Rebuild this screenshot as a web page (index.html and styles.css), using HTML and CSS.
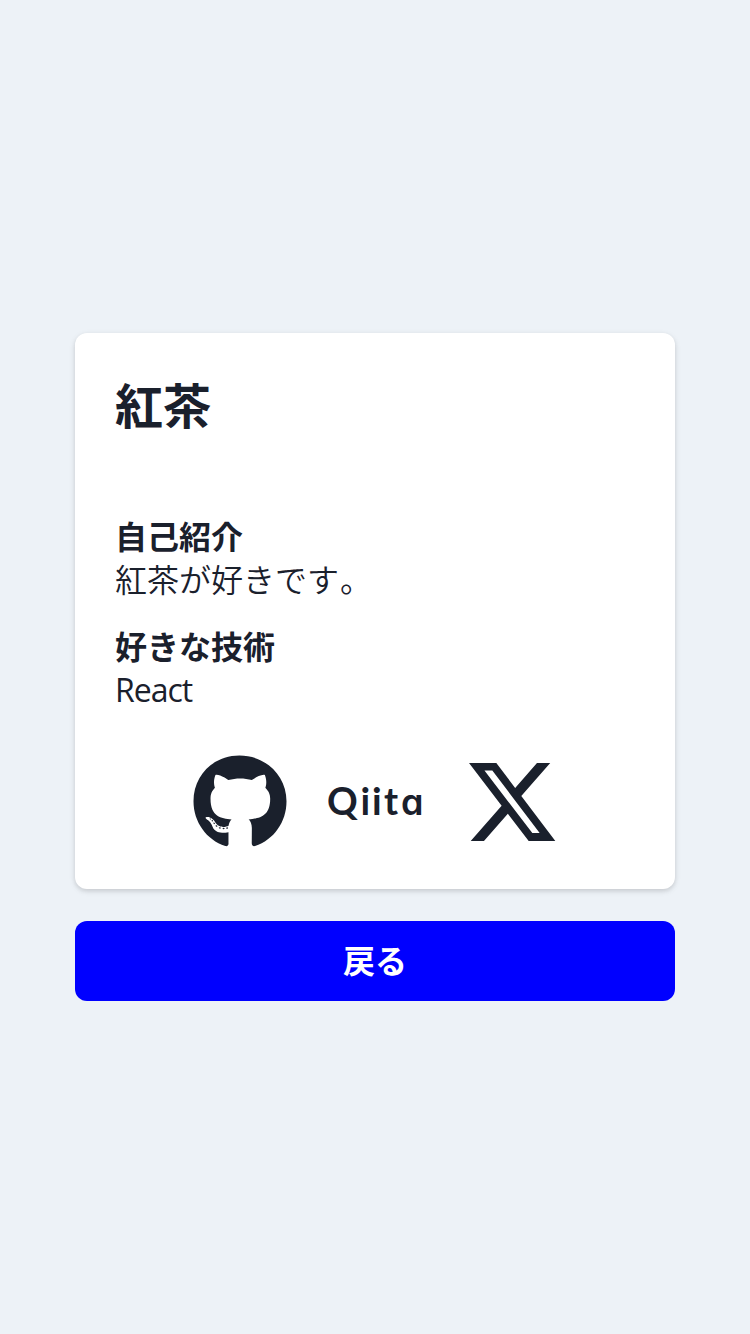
FILE: index.html
```html
<!DOCTYPE html>
<html lang="ja">
<head>
<meta charset="utf-8">
<meta name="viewport" content="width=device-width">
<title>紅茶</title>
<link rel="stylesheet" href="styles.css">
</head>
<body>
<main class="page">
  <section class="card">
    <h1 class="name">紅茶</h1>
    <div class="details">
      <section>
        <h2 class="label">自己紹介</h2>
        <p class="value">紅茶が好きです<span class="stop">。</span></p>
      </section>
      <section>
        <h2 class="label">好きな技術</h2>
        <p class="value latin">React</p>
      </section>
    </div>
    <nav class="links">
      <a class="link" aria-label="GitHub"><svg class="icon" viewBox="0 0 496 512"><path d="M165.9 397.4c0 2-2.3 3.6-5.2 3.6-3.3.3-5.6-1.3-5.6-3.6 0-2 2.3-3.6 5.2-3.6 3-.3 5.6 1.3 5.6 3.6zm-31.1-4.5c-.7 2 1.3 4.3 4.3 4.9 2.6 1 5.6 0 6.2-2s-1.3-4.3-4.3-5.2c-2.6-.7-5.5.3-6.2 2.3zm44.2-1.7c-2.9.7-4.9 2.6-4.6 4.9.3 2 2.9 3.3 5.9 2.6 2.9-.7 4.9-2.6 4.6-4.6-.3-1.9-3-3.2-5.9-2.9zM244.8 8C106.1 8 0 113.3 0 252c0 110.9 69.8 205.8 169.5 239.2 12.8 2.3 17.3-5.6 17.3-12.1 0-6.2-.3-40.4-.3-61.4 0 0-70 15-84.7-29.8 0 0-11.4-29.1-27.8-36.6 0 0-22.9-15.7 1.6-15.4 0 0 24.9 2 38.6 25.8 21.9 38.6 58.6 27.5 72.9 20.9 2.3-16 8.8-27.1 16-33.7-55.9-6.2-112.3-14.3-112.3-110.5 0-27.5 7.6-41.3 23.6-58.9-2.6-6.5-11.1-33.3 2.6-67.9 20.9-6.5 69 27 69 27 20-5.6 41.5-8.5 62.8-8.5s42.8 2.9 62.8 8.5c0 0 48.1-33.6 69-27 13.7 34.7 5.2 61.4 2.6 67.9 16 17.7 25.8 31.5 25.8 58.9 0 96.5-58.9 104.2-114.8 110.5 9.2 7.9 17 22.9 17 46.4 0 33.7-.3 75.4-.3 83.6 0 6.5 4.6 14.4 17.3 12.1C428.2 457.8 496 362.9 496 252 496 113.3 383.5 8 244.8 8zM97.2 352.9c-1.3 1-1 3.3.7 5.2 1.6 1.6 3.9 2.3 5.2 1 1.3-1 1-3.3-.7-5.2-1.6-1.6-3.9-2.3-5.2-1zm-10.8-8.1c-.7 1.3.3 2.9 2.3 3.9 1.6 1 3.6.7 4.3-.7.7-1.3-.3-2.9-2.3-3.9-2-.6-3.6-.3-4.3.7zm32.4 35.6c-1.6 1.3-1 4.3 1.3 6.2 2.3 2.3 5.2 2.6 6.5 1 1.3-1.3.7-4.3-1.3-6.2-2.2-2.3-5.2-2.6-6.5-1zm-11.4-14.7c-1.6 1-1.6 3.6 0 5.9 1.6 2.3 4.3 3.3 5.6 2.3 1.6-1.3 1.6-3.9 0-6.2-1.4-2.3-4-3.3-5.6-2z"/></svg></a>
      <a class="link" aria-label="Qiita"><svg class="icon" viewBox="0 0 96 96"><text class="wordmark" x="-1 32.5 44 56 73" y="60.5">Qiit<tspan class="wordmark-end">a</tspan></text></svg></a>
      <a class="link" aria-label="X"><svg class="icon" viewBox="0 0 512 512"><path d="M389.2 48h70.6L305.6 224.2 487 464H345L233.7 318.6 106.5 464H35.8L200.7 275.5 26.8 48H172.4L272.9 180.9 389.2 48zM364.4 421.8h39.1L151.1 88h-42L364.4 421.8z"/></svg></a>
    </nav>
  </section>
  <button class="back" type="button">戻る</button>
</main>
</body>
</html>
```

FILE: styles.css
```css
* {
  box-sizing: border-box;
  margin: 0;
  padding: 0;
}

body {
  background: #edf2f7;
  color: #1a202c;
  font-family: "Noto Sans CJK JP", sans-serif;
  font-size: 32px;
}

.page {
  min-height: 100vh;
  display: flex;
  flex-direction: column;
  align-items: center;
  justify-content: center;
  gap: 32px;
}

.card {
  width: 600px;
  height: 556px;
  padding: 36px 40px 40px;
  background: #fff;
  border-radius: 12px;
  box-shadow: 0 2px 6px rgba(0, 0, 0, 0.1), 0 2px 4px rgba(0, 0, 0, 0.08);
}

.name {
  font-size: 48px;
  line-height: 68px;
  font-weight: 700;
}

.details {
  display: grid;
  gap: 24px;
  padding-top: 79px;
}

.label {
  font-size: 32px;
  line-height: 38px;
  font-weight: 700;
}

.value {
  line-height: 48px;
  font-weight: 350;
}

.stop {
  margin-left: 1px;
}

.latin {
  padding-top: 2px;
  font-family: "Open Sans", "Noto Sans", sans-serif;
  font-weight: 400;
  font-size: 32px;
  letter-spacing: -1px;
}

.links {
  display: flex;
  justify-content: center;
  gap: 40px;
  padding: 40px 0 0 2px;
}

.link {
  display: flex;
}

.icon {
  width: 96px;
  height: 96px;
  fill: currentColor;
}

.wordmark {
  font-family: Lato, sans-serif;
  font-size: 38px;
  font-weight: 700;
}

.wordmark-end {
  font-family: Inter, sans-serif;
  font-size: 36px;
  font-weight: 600;
  font-feature-settings: "cv11";
}

.back {
  width: 600px;
  height: 80px;
  padding-bottom: 3px;
  border: 0;
  border-radius: 12px;
  background: #00f;
  color: #fff;
  font: 700 32px/77px "Noto Sans CJK JP", sans-serif;
}
```
